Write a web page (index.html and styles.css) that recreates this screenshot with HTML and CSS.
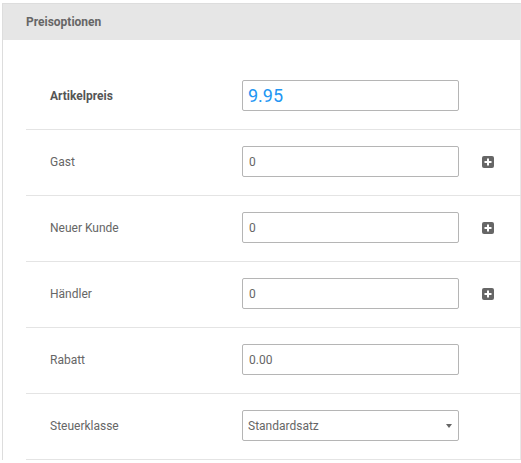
FILE: index.html
```html
<!DOCTYPE html>
<html lang="de">
<head>
<meta charset="utf-8">
<title>Preisoptionen</title>
<link rel="stylesheet" href="styles.css">
</head>
<body>
<section class="panel">
  <header class="panel-head">Preisoptionen</header>
  <div class="panel-body">
    <div class="row">
      <label class="label label-strong">Artikelpreis</label>
      <input class="field field-price" type="text" value="9.95">
    </div>
    <div class="row">
      <label class="label">Gast</label>
      <input class="field" type="text" value="0">
      <span class="add"><svg width="12" height="12" viewBox="0 0 12 12"><rect x="0" y="0" width="12" height="12" rx="2" fill="#666"/><path d="M6 2.5v7M2.5 6h7" stroke="#fff" stroke-width="2"/></svg></span>
    </div>
    <div class="row">
      <label class="label">Neuer Kunde</label>
      <input class="field" type="text" value="0">
      <span class="add"><svg width="12" height="12" viewBox="0 0 12 12"><rect x="0" y="0" width="12" height="12" rx="2" fill="#666"/><path d="M6 2.5v7M2.5 6h7" stroke="#fff" stroke-width="2"/></svg></span>
    </div>
    <div class="row">
      <label class="label">Händler</label>
      <input class="field" type="text" value="0">
      <span class="add"><svg width="12" height="12" viewBox="0 0 12 12"><rect x="0" y="0" width="12" height="12" rx="2" fill="#666"/><path d="M6 2.5v7M2.5 6h7" stroke="#fff" stroke-width="2"/></svg></span>
    </div>
    <div class="row">
      <label class="label">Rabatt</label>
      <input class="field" type="text" value="0.00">
    </div>
    <div class="row">
      <label class="label">Steuerklasse</label>
      <div class="select-wrap">
        <select class="field field-select">
          <option>Standardsatz</option>
        </select>
      </div>
    </div>
  </div>
</section>
</body>
</html>
```

FILE: styles.css
```css
html, body {
  margin: 0;
  padding: 0;
  background: #fff;
}
body {
  padding: 3px 0 0 2px;
  font-family: Roboto, "Liberation Sans", Arial, sans-serif;
  font-size: 12px;
  color: #666;
}
.panel {
  width: 519px;
  box-sizing: border-box;
  border: 1px solid #dddddd;
  border-bottom: none;
  border-right-color: #e8e8e8;
}
.panel-head {
  height: 36px;
  line-height: 36px;
  padding-left: 23px;
  background: #e6e6e6;
  font-weight: bold;
  font-size: 12px;
  color: #666;
}
.panel-body {
  padding-top: 24px;
  margin-right: -2px;
}
.row {
  display: flex;
  align-items: center;
  margin-left: 23px;
  padding: 16px 0 18px 24px;
  border-bottom: 1px solid #e4e4e4;
}
.label {
  width: 192px;
  flex: none;
  font-size: 12px;
  color: #666;
}
.label-strong {
  font-weight: bold;
  color: #555;
}
.field {
  width: 217px;
  height: 31px;
  box-sizing: border-box;
  border: 1px solid #b5b5b5;
  border-radius: 2px;
  padding: 0 6px;
  margin: 0;
  font-family: Roboto, "Liberation Sans", Arial, sans-serif;
  font-size: 12px;
  color: #666;
  background: #fff;
  outline: none;
}
.field-price {
  font-size: 18px;
  color: #2196f3;
  padding-left: 5px;
}
.add {
  display: flex;
  margin-left: 23px;
}
.select-wrap {
  position: relative;
  width: 217px;
}
.field-select {
  appearance: none;
  -webkit-appearance: none;
  display: block;
  padding-left: 5px;
}
.select-wrap::after {
  content: "";
  position: absolute;
  right: 7px;
  top: 14px;
  border-left: 3.5px solid transparent;
  border-right: 3.5px solid transparent;
  border-top: 4px solid #666;
  pointer-events: none;
}
```
